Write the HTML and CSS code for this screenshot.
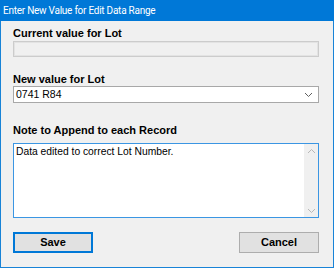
FILE: index.html
```html
<!DOCTYPE html>
<html>
<head>
<meta charset="utf-8">
<link rel="stylesheet" href="styles.css">
</head>
<body>
<div class="window">
  <div class="titlebar">Enter New Value for Edit Data Range</div>
  <div class="content">
    <div class="label label-first">Current value for Lot</div>
    <div class="textbox disabled"></div>
    <div class="label label-second">New value for Lot</div>
    <div class="combo">
      <span class="combo-text">0741 R84</span>
      <svg class="chev" width="9" height="6" viewBox="0 0 9 6"><path d="M1 1 L4.5 4.5 L8 1" fill="none" stroke="#5f5f5f" stroke-width="1"/></svg>
    </div>
    <div class="label label-third">Note to Append to each Record</div>
    <div class="memo">
      <div class="memo-text">Data edited to correct Lot Number.</div>
      <div class="scrollbar">
        <svg width="9" height="6" viewBox="0 0 9 6"><path d="M1 5 L4.5 1.5 L8 5" fill="none" stroke="#b8b8b8" stroke-width="1"/></svg>
        <svg width="9" height="6" viewBox="0 0 9 6"><path d="M1 1 L4.5 4.5 L8 1" fill="none" stroke="#b8b8b8" stroke-width="1"/></svg>
      </div>
    </div>
    <div class="buttons">
      <div class="btn btn-default">Save</div>
      <div class="btn">Cancel</div>
    </div>
  </div>
</div>
</body>
</html>
```

FILE: styles.css
```css
html, body {
  margin: 0;
  padding: 0;
  background: #f0f0f0;
}
.window {
  width: 334px;
  height: 268px;
  box-sizing: border-box;
  border: 1px solid #1883d7;
  border-top: none;
  background: #f0f0f0;
  font-family: "Liberation Sans", Arial, sans-serif;
  font-size: 11px;
  color: #000;
}
.titlebar {
  height: 21px;
  margin: 0 -1px;
  background: #0078d7;
  color: #fff;
  font-family: Roboto, "Liberation Sans", sans-serif;
  font-size: 10px;
  letter-spacing: -0.25px;
  line-height: 21px;
  padding-left: 3px;
  box-sizing: border-box;
  white-space: nowrap;
}
.content {
  padding-left: 12px;
}
.label {
  font-weight: bold;
  line-height: 13px;
  height: 13px;
}
.label-first { margin-top: 6px; }
.label-second { margin-top: 16px; }
.label-third { margin-top: 21px; }
.textbox {
  width: 306px;
  height: 16px;
  box-sizing: border-box;
  margin-top: 1px;
}
.disabled {
  border: 1px solid #cccccc;
  background: #f0f0f0;
  box-shadow: inset 0 0 0 1px #e3e3e3;
}
.combo {
  width: 306px;
  height: 17px;
  box-sizing: border-box;
  border: 1px solid #a8a8a8;
  background: #fff;
  display: flex;
  align-items: center;
  justify-content: space-between;
  padding: 0 5px 0 2px;
  font-size: 10.5px;
}
.combo-text {
  line-height: 13px;
}
.chev {
  display: block;
}
.memo {
  width: 306px;
  height: 75px;
  box-sizing: border-box;
  margin-top: 6px;
  border: 1px solid #3b96e3;
  background: #fff;
  display: flex;
}
.memo-text {
  flex: 1;
  padding: 1px 0 0 2px;
  line-height: 13px;
  font-size: 10.3px;
}
.scrollbar {
  width: 14px;
  background: #f0f0f0;
  display: flex;
  flex-direction: column;
  justify-content: space-between;
  align-items: center;
  padding: 4px 0 3px;
  box-sizing: border-box;
}
.scrollbar svg {
  display: block;
}
.buttons {
  width: 306px;
  margin-top: 14px;
  display: flex;
  justify-content: space-between;
}
.btn {
  width: 80px;
  height: 21px;
  box-sizing: border-box;
  border: 1px solid #adadad;
  background: #e1e1e1;
  font-weight: bold;
  text-align: center;
  line-height: 19px;
}
.btn-default {
  border: 2px solid #0078d7;
  line-height: 17px;
}
```
